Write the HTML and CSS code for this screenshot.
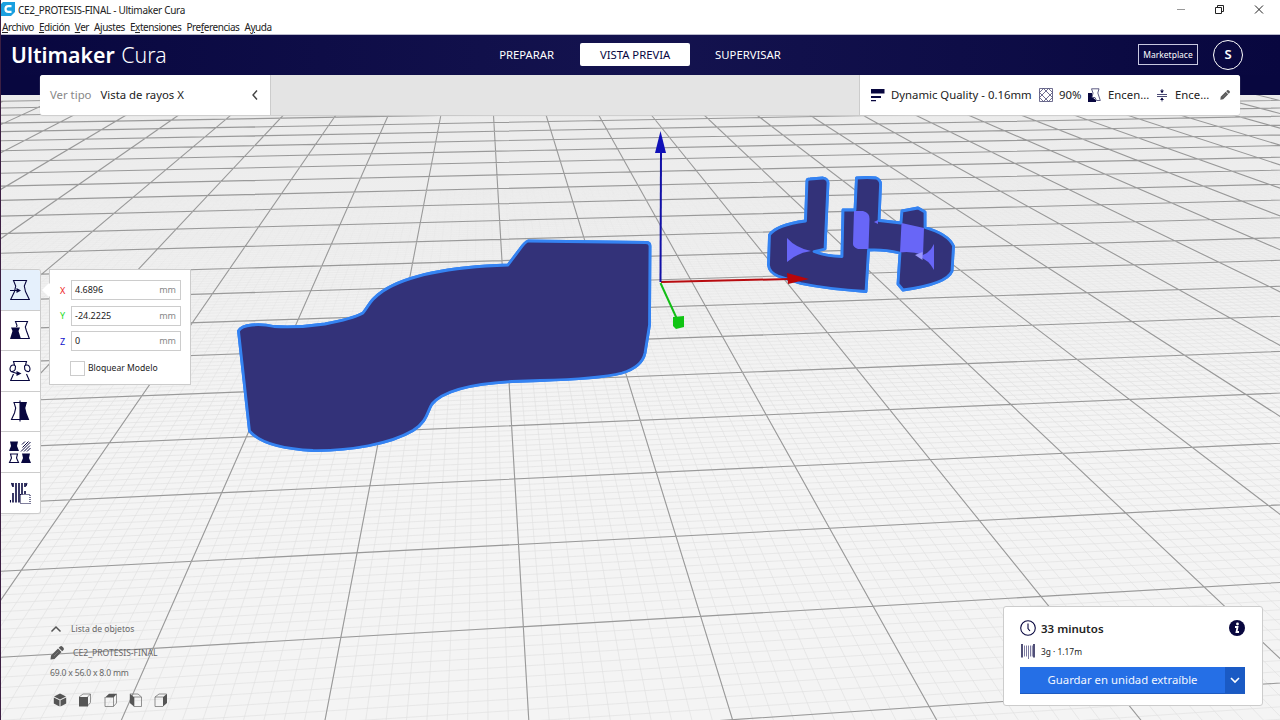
FILE: index.html
```html
<!DOCTYPE html>
<html lang="es">
<head>
<meta charset="utf-8">
<title>CE2_PROTESIS-FINAL - Ultimaker Cura</title>
<link rel="stylesheet" href="styles.css">
</head>
<body>
<div class="app">
  <svg class="scene" viewBox="0 0 1280 720" width="1280" height="720">
    <g id="grid"></g>
    <g class="model">
      <path id="body" d="M528 241L646 242.500Q650 242.500 650 246L649.500 325L645 353Q642 367 622 373Q598 379 540 380.500L512 381.500Q448 385 432 404C427 411 428 421 413 430.500C390 444 350 451 313 450.500Q264 448 249.500 431L238.500 331Q241 326 252 325Q263 324 274 326.500Q298 328 325 324Q352 319 363 313C370 304 370 300 383 291Q418 268 508 265L520 249Q525 242 528 241Z"/>
      <path id="ring" d="M807 181Q807 179 810 179L823 178Q828 179 828 183L825 249L814 251.500Q825 256 842 256.500L843 210H855L856.500 178Q868 177 876 178Q881 180 880.500 185L879 220.500L901 223L902 211L918 208L925 212V227.500Q948 234 953.500 246L952 271Q947 284 903 290L898 284L900 253Q883 249 868.500 250L866 291.500Q828 289 801 283.500L778 276Q769 272 768.500 265L769.500 235Q776 225 805.500 221Z"/>
    </g>
    <g class="contour"><use href="#body"/><use href="#ring"/></g>
    <g class="overlap">
      <path d="M787 238Q796 248 811 251Q797 253 787 262Z"/>
      <path d="M854 211L863 211Q870 213 869.500 219L868.500 249H858Q853 247 853 244Z"/>
      <path d="M901.500 223L924 228L923 255Q912 251 900 252.500Z"/>
      <path d="M934 244V270Q929 260 918 256Q929 255 934 244ZM874 222L878 220V224Z"/>
    </g>
    <path class="overlap-bright" d="M915 255L922.500 252V260Z"/>
    <path class="axis-x" d="M661 282L790 279"/><path class="fill-x" d="M787 273L809 279L788 284Z"/>
    <path class="axis-z" d="M660.500 282L661 152"/><path class="fill-z" d="M660.500 131L666 153H655Z"/>
    <path class="axis-y" d="M660.500 283L677 319"/><path class="fill-y" d="M673 317L684 316V327L676 329L673 326Z"/>
  </svg>

  <header class="titlebar">
    <svg width="15" height="15" viewBox="0 0 15 15"><path fill="#1ba0e0" d="M2 0H14V10L10 14H0V2Z"/><path fill="none" stroke="#fff" stroke-width="2.200" d="M10.500 4.200H7.300Q4.500 4.200 4.500 7T7.300 9.800H10.500"/></svg>
    <span class="window-title">CE2_PROTESIS-FINAL - Ultimaker Cura</span>
    <svg class="window-buttons" width="90" height="12" viewBox="0 0 90 12"><path class="min" d="M1 5.500H9"/><path d="M39.500 3.500H45.500V9.500H39.500ZM41.500 3V1.500H47.500V7.500H46M79 1.500L87 9.500M87 1.500L79 9.500"/></svg>
  </header>
  <nav class="menubar">
    <span><u>A</u>rchivo</span><span><u>E</u>dición</span><span><u>V</u>er</span><span>A<u>j</u>ustes</span><span>E<u>x</u>tensiones</span><span>Pre<u>f</u>erencias</span><span>A<u>y</u>uda</span>
  </nav>
  <div class="header">
    <div class="logo"><b>Ultimaker</b> Cura</div>
    <div class="stages"><span>PREPARAR</span><span class="active">VISTA PREVIA</span><span>SUPERVISAR</span></div>
    <div class="account"><span class="market">Marketplace</span><span class="avatar">S</span></div>
  </div>
  <div class="toolbar-band">
    <div class="toolbar">
      <div class="view-type"><span class="muted">Ver tipo</span><span>Vista de rayos X</span>
        <svg width="8" height="12" viewBox="0 0 8 12"><path fill="none" stroke="#444" stroke-width="1.400" d="M6 1.500L2 6L6 10.500"/></svg></div>
      <div class="settings">
        <svg width="14" height="14" viewBox="0 0 14 14"><path fill="#08073f" d="M0 1H13.500V5.500H0ZM0 8H10V10H0ZM0 12H5V13.300H0Z"/></svg>
        <span class="t-quality">Dynamic Quality - 0.16mm</span>
        <svg width="14" height="14" viewBox="0 0 14 14"><path fill="none" stroke="#4b4a75" stroke-width=".8" d="M.5.5H13.500V13.500H.5ZM.5 4.500L4.500.5L13.500 9.500L9.500 13.500L.5 4.500M9.500.5L13.500 4.500L4.500 13.500L.5 9.500L9.500.5"/></svg>
        <span class="t-infill">90%</span>
        <svg width="14" height="14" viewBox="0 0 14 14"><path fill="#08073f" d="M0 5H4V9L8 12V14H0Z"/><path fill="#fff" stroke="#4b4a75" stroke-width=".9" d="M3.500.8H11L9.800 5L12.300 12.500H8.500L7 9.500H4L5 5Z"/></svg>
        <span class="t-support">Encen...</span>
        <svg width="12" height="14" viewBox="0 0 12 14"><path fill="none" stroke="#4b4a75" d="M1 6.500H11M1 8.500H11M6 1V5M6 10V13.500"/><path fill="#08073f" d="M4 2.500H8L6 5ZM4 12H8L6 9.500Z"/></svg>
        <span class="t-adhesion">Ence...</span>
        <svg width="10" height="10" viewBox="0 0 14 14"><use href="#pencil"/></svg>
      </div>
    </div>
  </div>

  <main class="workspace">
    <div class="tools-row">
      <div class="tools">
        <div class="tool selected"><svg width="24" height="24" viewBox="0 0 24 24"><path d="M5.500 2.500H18.500L16.300 8L17.500 13.500L21.300 21.500H2.700L6.500 13.500L7.700 8Z"/><path d="M2 12.500H10"/><path class="solid" d="M8.500 10L13 12.500L8.500 15Z"/></svg></div>
        <div class="tool"><svg width="24" height="24" viewBox="0 0 24 24"><path d="M8.500 9L9 7.500L7.500 3.500H19.500L17.300 9L18.500 13L21.300 20.500H12"/><path class="solid" d="M3 9.500H12L10.500 13L13 21H2L4.500 13Z"/></svg></div>
        <div class="tool"><svg width="24" height="24" viewBox="0 0 24 24"><path d="M6.500 6L5.500 2.500H18.500L17.500 6M5.500 15L2.700 21.500H21.300L18.500 15M7.500 7Q5 5 3 7Q1 10 3 12.500L9 14.500M3 12.500Q6 13 7.200 10.500L7.500 7M16.500 7Q19 5 21 7Q23 10 21 12.500Q18 13 16.800 10.500Z"/><path class="solid" d="M8.500 12L13.500 14.500L8.500 17Z"/></svg></div>
        <div class="tool"><svg width="24" height="24" viewBox="0 0 24 24"><path d="M12 3.500H6L7.700 9L6.500 14L3.500 20.500H12M12 1.500V22.500"/><path class="solid" d="M12 3H19L17.300 9L18.500 14L21.300 21H12Z"/></svg></div>
        <div class="tool"><svg width="24" height="24" viewBox="0 0 24 24"><path class="solid" d="M2 1.500H10L9 6L11 11H1L3 6ZM14 13.500H22L21 18L23 23H13L15 18Z"/><path d="M2.500 14H9.500L8.500 18L10.500 22.500H1.500L3.500 18Z"/><path class="hatch" d="M14 4.500L17 1.500M14.500 7.500L20.500 1.500M13 11.500L22.500 2M16 11.500L22 5.500M19 11.500L22.500 8"/></svg></div>
        <div class="tool"><svg width="24" height="24" viewBox="0 0 24 24"><path class="bars" d="M8 2V21.500M11 2V21.500M14 2V14M5 2V6M5 12V21.500M17 2V6M17 10V13"/><path d="M2.500 19V21.500M19 2L18 5M3.500 2L4.500 5"/><rect class="dots" x="12.500" y="13.500" width="9.500" height="9"/></svg></div>
      </div>
      <div class="move-panel">
        <label class="coord"><i class="x">X</i><span class="field"><span>4.6896</span><em>mm</em></span></label>
        <label class="coord"><i class="y">Y</i><span class="field"><span>-24.2225</span><em>mm</em></span></label>
        <label class="coord"><i class="z">Z</i><span class="field"><span>0</span><em>mm</em></span></label>
        <label class="lock"><span class="box"></span>Bloquear Modelo</label>
      </div>
    </div>
    <div class="bottom-row">
      <div class="objects">
        <div class="object-head"><svg width="12" height="8" viewBox="0 0 12 8"><path fill="none" stroke="#555" stroke-width="1.500" d="M1.500 6.500L6 2L10.500 6.500"/></svg>Lista de objetos</div>
        <div class="object-name"><svg width="14" height="14" viewBox="0 0 14 14"><g id="pencil"><path fill="#5a5a5a" d="M.5 13.500L1 9.500L8 2.500L11.500 6L4.500 13ZM8.700 1.800L10 .5Q11.300-.4 12.500.7L13.300 1.500Q14.400 2.800 13.500 4L12.200 5.300Z"/><path stroke="#999" stroke-width=".5" d="M4 10L8.500 5.500"/></g></svg>CE2_PROTESIS-FINAL</div>
        <div class="object-size">69.0 x 56.0 x 8.0 mm</div>
        <div class="views">
          <svg width="14" height="14" viewBox="0 0 14 14"><path fill="#555" d="M7 .5L13 3.500L7 6.500L1 3.500ZM.8 4.500L6.500 7.300V13.500L.8 10.500ZM13.200 4.500L7.500 7.300V13.500L13.200 10.500Z"/></svg>
          <svg width="14" height="14" viewBox="0 0 14 14"><path class="edge" d="M1 4L5 1H12.500V9.500L9.500 13M9.500 4L12.500 1"/><path fill="#555" d="M1 4H10V13.500H1Z"/></svg>
          <svg width="14" height="14" viewBox="0 0 14 14"><path class="edge" d="M1 4V13.500H9.500V4M9.500 13.500L12.500 10V1"/><path fill="#555" d="M1 4.500L5 .7H13L9.500 4.500Z"/></svg>
          <svg width="14" height="14" viewBox="0 0 14 14"><path class="edge" d="M1 1H9L12.500 4V13.500H5V4M5 4H12.500"/><path fill="#555" d="M.8.8L5 4V13.500L.8 10Z"/></svg>
          <svg width="14" height="14" viewBox="0 0 14 14"><path class="edge" d="M9 4H1V13.500H9M1 4L5 1H12.500"/><path fill="#555" d="M9 4L13 .8V10L9 13.500Z"/></svg>
        </div>
      </div>
      <div class="action-panel">
        <div class="time"><svg width="16" height="16" viewBox="0 0 16 16"><circle cx="8" cy="8" r="7.300" fill="none" stroke="#08073f" stroke-width="1.100"/><path fill="none" stroke="#08073f" stroke-width="1.100" d="M8 3.500V8.500L10 11"/></svg><b>33 minutos</b>
          <svg class="info" width="16" height="16" viewBox="0 0 16 16"><circle cx="8" cy="8" r="8" fill="#08073f"/><circle cx="8.500" cy="4" r="1.400" fill="#fff"/><path fill="none" stroke="#fff" stroke-width="1.800" d="M6 7H8.500L7.500 12H10"/></svg></div>
        <div class="material"><svg width="14" height="15" viewBox="0 0 14 15"><path stroke="#08073f" stroke-width="1.400" d="M1 0V13.500M13 0V13.500"/><path stroke="#7c7aa0" d="M3.500 1.500V12.500M5.500 1.500V12.500M7.500 1.500V15M9.500 1.500V12.500M11.300 1.500V12.500"/></svg><span>3g · 1.17m</span></div>
        <div class="save"><span>Guardar en unidad extraíble</span><span class="drop"><svg width="10" height="7" viewBox="0 0 10 7"><path fill="none" stroke="#fff" stroke-width="1.600" d="M1 1L5 5L9 1"/></svg></span></div>
      </div>
    </div>
  </main>
</div>
<script src="grid.js"></script>
</body>
</html>
```

FILE: styles.css
```css
* { box-sizing: border-box; }
body { margin: 0; font-family: "Noto Sans", "Open Sans", sans-serif; color: #222; font-size: 11.35px; overflow: hidden; }
svg { display: block; flex: none; }
.app { position: relative; width: 1280px; height: 720px; display: flex; flex-direction: column; border-left: 1px solid #3c1f43; background: #fff; overflow: hidden; }
.app > * { position: relative; flex: none; }
.app > .scene { position: absolute; left: -1px; top: 0; background: linear-gradient(#ebebeb 95px, #f4f4f4 420px); }
.grid-minor { fill: none; stroke: #e0e0e0; stroke-width: .65; }
.grid-major { fill: none; stroke: #999; stroke-width: 1.1; }
.model path { fill: #333279; stroke: #3583f2; stroke-width: 2.8; stroke-linejoin: round; }
.contour { fill: none; stroke: #1d5ad0; stroke-width: .6; }
.overlap { fill: #6866f7; }
.overlap-bright { fill: #9a98fa; }
.axis-x, .axis-y, .axis-z { fill: none; stroke-width: 2; }
.axis-x { stroke: #b80b0f; }
.axis-y { stroke: #12bd16; }
.axis-z { stroke: #1210a6; }
.fill-x { fill: #b80609; }
.fill-y { fill: #10c413; }
.fill-z { fill: #1010b8; }

.titlebar { height: 19px; background: #fff; display: flex; align-items: center; }
.window-title { margin-left: 2px; font-size: 10px; letter-spacing: -.3px; }
.window-buttons { margin-left: auto; margin-right: 14px; fill: none; stroke: #222; }
.window-buttons .min { stroke: #999; }
.menubar { height: 16px; background: #fff; display: flex; gap: 5px; padding-left: 1px; line-height: 16px; font-size: 10px; letter-spacing: -.52px; border-bottom: 1px solid #b9b9cb; }
.menubar { letter-spacing: -.44px; }
.header { height: 40px; padding-bottom: 1px; background: linear-gradient(90deg, #08073f, #14134f 50%, #08073f); color: #fff; display: grid; grid-template-columns: 1fr auto 1fr; align-items: center; }
.logo { padding-left: 10px; font-size: 21.3px; font-weight: 300; line-height: 38px; white-space: nowrap; }
.logo b { font-weight: 600; margin-right: 1px; }
.stages { display: flex; align-items: center; font-size: 11.3px; }
.stages span { height: 23px; line-height: 23px; padding: 0 26px 0 25px; }
.stages .active { background: #fff; color: #08073f; padding: 0; width: 110px; text-align: center; border-radius: 2px; }
.account { display: flex; align-items: center; justify-content: flex-end; gap: 15px; padding-right: 37px; }
.market { width: 60px; height: 21px; border: 1px solid #c8c8e0; font-size: 8.5px; line-height: 19px; text-align: center; }
.avatar { width: 30px; height: 30px; border: 1px solid #fff; border-radius: 50%; text-align: center; font-weight: 600; font-size: 13px; line-height: 27px; }
.toolbar-band { background: linear-gradient(#08073f 20px, transparent 20px); padding: 0 40px 0 39px; }
.toolbar { height: 40px; background: #e4e4e4; display: flex; justify-content: space-between; border-radius: 3px; box-shadow: 0 1px 1px #ccc; overflow: hidden; }
.view-type { width: 231px; background: #fff; display: flex; align-items: center; padding: 0 11px 1px 10px; gap: 9px; border-right: 1px solid #ccc; white-space: nowrap; }
.view-type svg { margin-left: auto; }
.muted { color: #888; }
.settings { width: 381px; background: #fff; display: flex; align-items: center; padding: 0 0 1px 11px; border-left: 1px solid #ccc; white-space: nowrap; }
.settings span { flex: none; }
.t-quality { width: 154px; padding-left: 6px; }
.t-infill { width: 35px; padding-left: 6px; }
.t-support { width: 54px; padding-left: 6px; }
.t-adhesion { width: 52px; padding-left: 7px; }

.workspace { height: 605px; padding-top: 154px; display: flex; flex-direction: column; justify-content: space-between; }
.tools-row { display: flex; align-items: flex-start; gap: 8px; }
.tools { width: 40px; height: 245px; display: grid; grid-template-rows: repeat(6, 1fr); background: #fff; border: 1px solid #ccc; border-left: 0; border-radius: 0 3px 3px 0; overflow: hidden; }
.tool { display: flex; align-items: center; padding-left: 7px; border-bottom: 1px solid #ccc; }
.tool:last-child { border: 0; }
.tool svg { fill: none; stroke: #08073f; stroke-width: 1.1; }
.tool .solid { fill: #08073f; stroke: none; }
.tool .bars { stroke-width: 1.6; }
.tool .hatch { stroke-width: 1; }
.tool .dots { fill: #fff; stroke-dasharray: 1 1; }
.selected { background: #e5f0fc; }
.move-panel { position: relative; width: 142px; height: 116px; background: #fff; border: 1px solid #ccc; padding: 10px 9px 0 10px; display: flex; flex-direction: column; gap: 5.5px; font-size: 9px; }
.move-panel::before { content: ""; position: absolute; left: -6px; top: 15px; width: 10px; height: 10px; background: #fff; transform: rotate(45deg); }
.coord { display: flex; align-items: center; height: 20px; }
.coord i { width: 11px; font-style: normal; }
.x { color: #e22; }
.y { color: #2d2; }
.z { color: #11c; }
.field { flex: 1; height: 20px; border: 1px solid #ccc; display: flex; align-items: center; justify-content: space-between; padding: 0 4px 0 3px; line-height: 18px; }
.field em { font-style: normal; color: #888; }
.lock { display: flex; align-items: center; gap: 3px; padding-left: 10px; margin-top: 4px; font-size: 8.6px; }
.box { width: 15px; height: 15px; border: 1px solid #ccc; }

.bottom-row { display: flex; justify-content: space-between; align-items: flex-end; padding: 0 17px 14px 49px; }
.objects { font-size: 8.6px; color: #666; white-space: nowrap; margin-bottom: -2px; }
.object-head, .object-name { display: flex; align-items: center; height: 24px; padding-top: 1px; }
.object-head svg { margin-right: 9px; }
.object-name svg { margin-right: 9px; }
.object-size { height: 18px; line-height: 18px; letter-spacing: -.2px; }
.views { display: flex; gap: 11.3px; padding: 11px 0 1px 3px; }
.edge { fill: none; stroke: #777; stroke-width: .8; }
.action-panel { width: 260px; height: 100px; background: #fff; border: 1px solid #ccc; border-radius: 3px; padding: 13px 17px 0 16px; }
.time, .material { display: flex; align-items: center; }
.time { height: 16px; font-size: 11.5px; gap: 5px; }
.time b { font-weight: 600; }
.info { margin-left: auto; }
.material { height: 16px; margin: 7px 0 8px 1px; gap: 6px; font-size: 8.4px; }
.save { height: 27px; background: #256fe6; border-bottom: 1px solid #1e5bc0; color: #f2f6ff; display: flex; line-height: 26px; text-align: center; }
.save > span:first-child { flex: 1; }
.drop { width: 20px; background: #1a5ac4; display: flex; align-items: center; justify-content: center; }
```

FILE: grid.js
```js
// Perspective projection of build plate cell (i, j) to scene pixels.
function project(i, j) {
  const cx = 0.010274 * i;
  const cy = -0.0928 * j;
  const w = 1 + cx + cy;
  return [(511.6 + cx * 13157 + cy * 481.2) / w, (425.7 - cx * 112 - cy * 95.3) / w];
}

function line(a, b) {
  const p = project(...a);
  const q = project(...b);
  return `M${p[0].toFixed(2)} ${p[1].toFixed(2)}L${q[0].toFixed(2)} ${q[1].toFixed(2)}`;
}

const I0 = -13, I1 = 22, J0 = -19, J1 = 7;

function pathFor(step, from, to) {
  let d = "";
  for (let i = I0; i <= I1 + 1e-6; i += step) d += line([i, from], [i, to]);
  for (let j = from; j <= to + 1e-6; j += step) d += line([I0, j], [I1, j]);
  return d;
}

// Fine lines fade out with distance so they do not merge into a solid tone.
let minor = "";
[[-1, J1, 1], [-3, -1, 0.8], [-5, -3, 0.55], [-7, -5, 0.35], [-9, -7, 0.2]].forEach(([from, to, opacity]) => {
  minor += `<path class="grid-minor" opacity="${opacity}" d="${pathFor(0.1, from, to)}"/>`;
});

document.getElementById("grid").innerHTML =
  minor + `<path class="grid-major" d="${pathFor(1, J0, J1)}"/>`;
```
